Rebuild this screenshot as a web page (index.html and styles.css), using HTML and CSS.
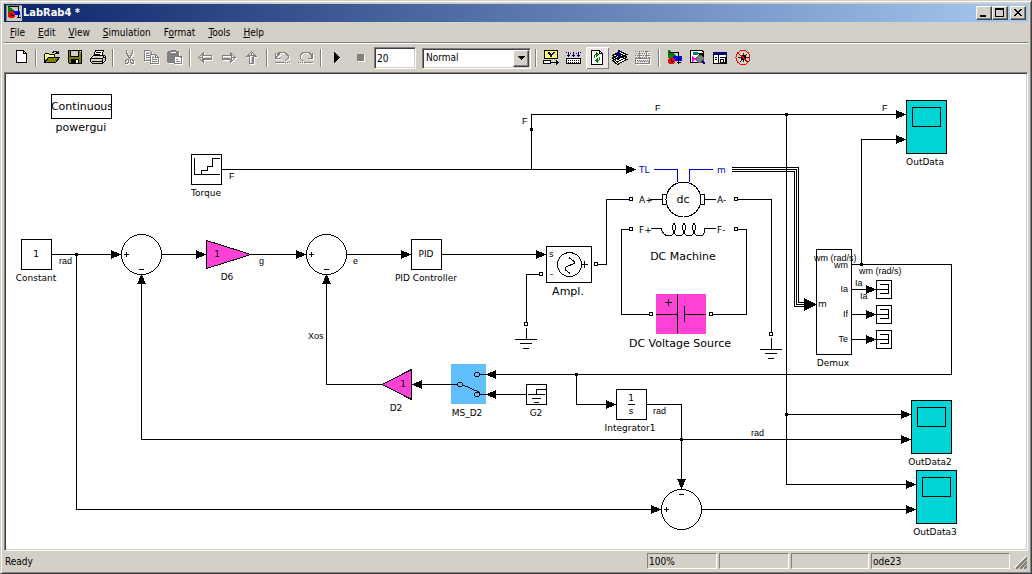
FILE: index.html
```html
<!DOCTYPE html>
<html lang="en">
<head>
<meta charset="utf-8">
<title>LabRab4 *</title>
<link rel="stylesheet" href="styles.css">
</head>
<body>
<div class="window">
  <header class="titlebar">
    <svg class="app-icon" viewBox="0 0 16 16" aria-hidden="true">
      <path fill="#c8ccc8" d="M0 0h16v16H0z"/><path fill="none" stroke="#808080" d="M.5 15.500V.5h15"/>
      <path fill="#008000" d="M2 1l6 4-4 6H2z"/><path fill="#00f" d="M7 6h7v4H7z"/>
      <circle cx="5.500" cy="9.500" r="3.500" fill="red"/><path fill="none" stroke="#000" d="M3 1.500h9.500V13M10.500 12.500h4M5.500 8v2.500H8"/>
    </svg>
    <h1 class="title">LabRab4 *</h1>
    <div class="window-buttons">
      <button class="win-btn" aria-label="Minimize"><svg viewBox="0 0 12 10"><path d="M2 7h6v2H2z"/></svg></button>
      <button class="win-btn" aria-label="Maximize"><svg viewBox="0 0 12 10"><path fill-rule="evenodd" d="M1 0h9v9H1zM2 2v6h7V2z"/></svg></button>
      <button class="win-btn win-close" aria-label="Close"><svg viewBox="0 0 12 10"><path d="M2 1h2v1h1v1h2V2h1V1h2v1H9v1H8v1H7v1h1v1h1v1h1v1H8V7H7V6H5v1H4v1H2V7h1V6h1V5h1V4H4V3H3V2H2z"/></svg></button>
    </div>
  </header>

  <nav class="menubar">
    <button class="menu"><u>F</u>ile</button>
    <button class="menu"><u>E</u>dit</button>
    <button class="menu"><u>V</u>iew</button>
    <button class="menu"><u>S</u>imulation</button>
    <button class="menu">F<u>o</u>rmat</button>
    <button class="menu"><u>T</u>ools</button>
    <button class="menu"><u>H</u>elp</button>
  </nav>

  <div class="toolbar" role="toolbar" aria-label="Model">
    <button class="tool" aria-label="New"><svg viewBox="0 0 17 16"><path fill="#fff" stroke="#000" d="M4.500.5h7l3 3v9h-10zM11.500.5v3h3"/></svg></button>
    <span class="sep"></span>
    <button class="tool" aria-label="Open"><svg viewBox="0 0 17 16"><path fill="#ffff80" stroke="#000" d="M1.500 12V4.500l1-1h3l1 1h5v3H5.500z"/><path fill="#808000" stroke="#000" d="M1.500 12.500l4-5h11l-4 5z"/><path fill="none" stroke="#000" d="M9 2.500h1v-1h3v1h1v1h1V1M12 3.500h3.500"/></svg></button>
    <button class="tool" aria-label="Save"><svg viewBox="0 0 17 16"><path fill="#808000" stroke="#000" d="M2.500.5h13v13h-12l-1-1z"/><path fill="#d4d0c8" stroke="#000" d="M4.500.5h8v6h-8z"/><path d="M5 9h8v4H5z"/><path fill="#fff" d="M10 10h2v3h-2zM14 1h1v1h-1z"/></svg></button>
    <button class="tool" aria-label="Print"><svg viewBox="0 0 17 16"><path fill="#fff" stroke="#000" d="M6.500.5h8l-2 6h-8z"/><path stroke="#000" d="M7 2.500h5M6 4.500h5"/><path fill="#d4d0c8" stroke="#000" d="M1.500 8.500l3-3h11l-2 3v5h-10l-2-2zM13.500 8.500l3-2v4l-3 3"/><path fill="none" stroke="#000" d="M1 8.500h12M3 11.500h10"/><path fill="#ff0" d="M8 10h3v1H8z"/></svg></button>
    <span class="sep"></span>
    <button class="tool off" aria-label="Cut" disabled><svg viewBox="0 0 17 16"><path d="M6.500 0v3h1v2h1v2h1v2M12.500 0v3h-1v2h-1v2h-1v2"/><path d="M5.500 10.500h1v-1h2v3h-1v1h-2zM10.500 9.500h2v1h1v3h-2v-1h-1z"/></svg></button>
    <button class="tool off" aria-label="Copy" disabled><svg viewBox="0 0 17 16"><path d="M7 10.500H1.500V.5h5l2 2V4M3 3.500h3M3 5.500h4M3 7.500h4M7.500 4.500h5l3 3v6h-8zM12.500 4.500v3h3M9 7.500h2M9 9.500h5M9 11.500h5"/></svg></button>
    <button class="tool off" aria-label="Paste" disabled><svg viewBox="0 0 17 16"><path class="solid" d="M2 1h3V0h5v1h3v5h3v8H8v-1H2L1 12V2z"/><path class="light" d="M5 2.500h5"/><path class="page" d="M8.500 6.500h5l2 2v5h-7zM10 9.500h2M10 11.500h4"/></svg></button>
    <span class="sep"></span>
    <button class="tool off" aria-label="Back" disabled><svg viewBox="0 0 17 16"><path d="M1.500 7.500l5-5v3h8v4h-8v3zM2.500 7.500h3M5.500 4v7M6 8.500h9"/></svg></button>
    <button class="tool off" aria-label="Forward" disabled><svg viewBox="0 0 17 16"><path d="M15.500 7.500l-5-5v3h-8v4h8v3zM11.500 7.500h3M11.500 4v7M2 8.500h8"/></svg></button>
    <button class="tool off" aria-label="Up" disabled><svg viewBox="0 0 17 16"><path d="M8.500 1.500l-5 5h3v7h4v-7h3zM8.500 2.500v3M5 5.500h7M9.500 7v6"/></svg></button>
    <span class="sep"></span>
    <button class="tool off" aria-label="Undo" disabled><svg viewBox="0 0 17 16"><path d="M1.500 3v5h5M2 7.500l1-1v-2l2-2h6l3 3v3l-3 2M1 12.500h9M11 12.500h1M13 12.500h1M15 12.500h1M4 5.500l2-2"/></svg></button>
    <button class="tool off" aria-label="Redo" disabled><svg viewBox="0 0 17 16"><path d="M15.500 3v5h-5M15 7.500l-1-1v-2l-2-2H6l-3 3v3l3 2M7 12.500h9M5 12.500h1M3 12.500h1M1 12.500h1"/></svg></button>
    <span class="sep"></span>
    <button class="tool" aria-label="Start simulation"><svg viewBox="0 0 17 16"><path d="M6 2h1v1h1v1h1v1h1v1h1v1h1v1h-1v1h-1v1H9v1H8v1H7v1H6z"/></svg></button>
    <button class="tool off" aria-label="Stop simulation" disabled><svg viewBox="0 0 17 16"><path class="solid" d="M6 4h7v7H6z"/></svg></button>
    <input class="stop-time" type="text" value="20" aria-label="Simulation stop time">
    <span class="mode">
      <select class="mode-select" aria-label="Simulation mode"><option>Normal</option><option>Accelerator</option></select>
      <span class="mode-arrow"><svg viewBox="0 0 7 4"><path d="M0 0h7v1H6v1H5v1H4v1H3V3H2V2H1V1H0z"/></svg></span>
    </span>
    <span class="sep"></span>
    <button class="tool" aria-label="Library link display"><svg viewBox="0 0 17 16"><path fill="#ffff60" stroke="#000" d="M1.500.5h13v8h-13z"/><path fill="#000080" d="M5 2h2v1h1v1h1V3h1V2h2v1h-1v1h-1v1H9v2H7V5H6V4H5z"/><path fill="#fff" stroke="#000" d="M.5 10.500h7v3h-7z"/><path d="M8 12h5v-2h1v1h1v1h1v1h-1v1h-1v1h-1v-2H8z"/></svg></button>
    <button class="tool" aria-label="Build"><svg viewBox="0 0 17 16"><path fill="none" stroke="#000080" d="M2.500 2v5M7.500 2v5M12.500 2v5M1 5.500h3M6 5.500h3M11 5.500h3M0 2.500h1M4 3.500h1M10 3.500h1M14 2.500h1"/><path fill="#fff" stroke="#000" d="M.5 8.500h14v5H.5z"/><path stroke="#000" stroke-dasharray="1 1" d="M2 10.500h12M2 12.500h12"/></svg></button>
    <button class="tool pressed" aria-label="Refresh blocks" aria-pressed="true"><svg viewBox="0 0 17 16"><path fill="#fff" stroke="#000" d="M2.500.5h8l3 3v11h-11zM10.500.5v3h3"/><path fill="#008000" d="M7 2h1v1h1v1h1v1H9v1H8v1H7V5H6v3H5V5h1V4h1zM9 8H8v1H7v1H6v1h1v1h1v1h1v-2h1v-1h1V7h-1v3H9z"/></svg></button>
    <button class="tool" aria-label="Update diagram"><svg viewBox="0 0 17 16"><path fill="#fff" stroke="#000" d="M.5 10.500l8-4 6 3-9 5zM.5 8l8-4 6 3-9 5zM.5 5.500l8-4 6 3-9 5z"/><path fill="#000080" d="M6 0h2v4h2v1H9v1H8v1H6V6H5V5H4V4h2z"/></svg></button>
    <button class="tool off" aria-label="Build subsystem" disabled><svg viewBox="0 0 17 16"><path d="M4.500 1v7M11.500 1v7M2.500 5.500h4M9.500 5.500h4M.5 8.500h14v5H.5z"/><path stroke-dasharray="1 1" d="M0 1.500h15M1 3.500h14M0 5.500h15M1 7.500h14M2 10.500h12M3 11.500h11"/></svg></button>
    <span class="sep"></span>
    <button class="tool" aria-label="Library browser"><svg viewBox="0 0 17 16"><path fill="#008000" d="M2 0h1l7 5v3H2z"/><path fill="#00f" d="M7 6h9v5H7z"/><circle cx="5.500" cy="11" r="3.500" fill="red"/><path fill="none" stroke="#000" d="M3 2.500h9.500V14M11 12.500h4M5.500 8.500v3H8"/></svg></button>
    <button class="tool" aria-label="Model explorer"><svg viewBox="0 0 17 16"><path fill="#fff" stroke="#000" d="M1.500.5h12l1 2v10h-13z"/><path fill="#008080" d="M4 2h5v3H4z"/><path fill="#f0f" d="M3 6l5 3-5 3z"/><path stroke="#000" d="M9 3.500h4V7"/><circle cx="11" cy="9" r="3.500" fill="#808080" stroke="#606060"/><path stroke="#000080" stroke-width="2" d="M13 11l3 3"/></svg></button>
    <button class="tool" aria-label="Model browser"><svg viewBox="0 0 17 16"><path fill="#fff" stroke="#000" d="M1.500 2.500h13v11h-13z"/><path fill="#000080" d="M1 2h14v3H1z"/><path fill="none" stroke="#000" d="M6.500 5v8M3 7.500h2M3 9.500h2M8 7.500h5v5h-2M8.500 9.500h3v3h-3z"/></svg></button>
    <button class="tool" aria-label="Debug"><svg viewBox="0 0 17 16"><path fill="none" stroke="#202020" d="M4 4l8 8M12 4l-7 8M3 7.500h11M8.500 3v9"/><ellipse cx="8.500" cy="7.500" rx="3" ry="3"/><path fill="#ffffa0" d="M5 4h2v2H5zM9 11h2v1H9z"/><circle cx="8" cy="7.500" r="7" fill="none" stroke="red"/><path stroke="red" d="M3 3l10 9"/></svg></button>
  </div>

  <main class="canvas">
    <svg class="diagram" role="img" aria-label="LabRab4 block diagram">
      <defs>
        <path id="ar" d="M0 .5L-10-4v9z"/>
        <path id="al" d="M0 .5L10-4v9z"/>
        <path id="au" d="M.5 0L-4 10h9z"/>
        <path id="ad" d="M.5 0L-4-10h9z"/>
        <path id="dot" d="M-1-1h3v3h-3z"/>
        <path id="port" class="block" d="M-1.500-1.500h3v3h-3z"/>
        <path id="plus" class="wire" d="M-2 .5h5M.5-2v5"/>
        <path id="minus" class="wire" d="M-2 .5h5"/>
        <path id="ground" class="wire" d="M.5-11V.5M-11 .5h22M-6 4.500H6M-3 9.500h6"/>
        <g id="scope"><path class="scope-body" d="M.5.5h40v53H.5z"/><path class="scope-body" d="M6.500 7.500h28v19h-28z"/></g>
        <g id="term"><path class="block" d="M.5.5h15v18H.5z"/><path class="wire" d="M4 4.500h8.500v9H4M0 9.500h12"/></g>
      </defs>
      <g transform="translate(-6 -74)">
        <g class="wire">
          <path d="M221 169.500H630M531.500 169.500V114.500H900M786.500 114.500V484.500H910M786.500 414.500H905"/>
          <path d="M52 254.500H115M76.500 254.500V509.500H655M161 254.500H200M251 254.500H300M346 254.500H405M441 254.500H540"/>
          <path d="M141.500 280V439.500H905M326.500 280V384.500H382M415 384.500H451M490 394.500H526"/>
          <path d="M490 374.500H951.500V264.500H852M861.500 264.500V139.500H900M576.500 374.500V404.500H610M646 404.500H681.500V485M701 509.500H910"/>
          <path d="M852 289.500H870M852 314.500H870M852 339.500H870"/>
          <path d="M597 264.500H606.500V199.500H631M541 274.500H526.500V324M736 199.500H771.500V334M631 229.500H621.500V314.500H651M736 229.500H746.500V314.500H711"/>
          <path d="M732 167.500H798.500V302.500H806M732 169.500H796.500V304.500H806M732 171.500H794.500V306.500H806"/>
        </g>

        <use href="#dot" x="76" y="254"/><use href="#dot" x="531" y="129"/><use href="#dot" x="786" y="114"/><use href="#dot" x="786" y="414"/>
        <use href="#dot" x="861" y="264"/><use href="#dot" x="576" y="374"/><use href="#dot" x="681" y="439"/>

        <use href="#ar" x="121" y="254"/><use href="#ar" x="206" y="254"/><use href="#ar" x="306" y="254"/><use href="#ar" x="411" y="254"/>
        <use href="#ar" x="546" y="254"/><use href="#ar" x="636" y="169"/><use href="#ar" x="906" y="114"/><use href="#ar" x="906" y="139"/>
        <use href="#ar" x="876" y="289"/><use href="#ar" x="876" y="314"/><use href="#ar" x="876" y="339"/><use href="#ar" x="616" y="404"/>
        <use href="#ar" x="661" y="509"/><use href="#ar" x="911" y="414"/><use href="#ar" x="911" y="439"/><use href="#ar" x="916" y="484"/><use href="#ar" x="916" y="509"/>
        <use href="#al" x="412" y="384"/><use href="#al" x="486" y="374"/><use href="#al" x="486" y="394"/>
        <use href="#au" x="141" y="274"/><use href="#au" x="326" y="274"/><use href="#ad" x="681" y="489"/>
        <path d="M817 304.500L804 298v13z"/>

        <path class="block" d="M51.500 94.500h60v24h-60z"/>
        <svg x="52" y="95" width="59" height="23"><text class="big mid" x="30" y="15">Continuous</text></svg>
        <text class="big mid" x="81" y="131">powergui</text>

        <path class="block" d="M191.500 154.500h30v30h-30z"/>
        <path class="wire" d="M194.500 158v16.500h25M201.500 174v-3.500h6v-4h5v-8h7"/>
        <text class="name mid" x="206" y="196">Torque</text>

        <path class="block" d="M21.500 239.500h30v30h-30z"/>
        <text class="name mid" x="36" y="257">1</text>
        <text class="name mid" x="36" y="281">Constant</text>

        <circle class="block" cx="141.500" cy="254.500" r="20"/><use href="#plus" x="126" y="254"/><use href="#minus" x="141" y="269"/>
        <circle class="block" cx="326.500" cy="254.500" r="20"/><use href="#plus" x="311" y="254"/><use href="#minus" x="326" y="269"/>
        <circle class="block" cx="681.500" cy="509.500" r="20"/><use href="#plus" x="666" y="509"/><use href="#minus" x="681" y="494"/>

        <path class="gain" d="M206.500 240.500L251 254.500L206.500 268.500z"/>
        <text class="name mid" x="217" y="257">1</text><text class="name mid" x="227" y="280">D6</text>
        <path class="gain" d="M411.500 369.500L382 384.500L411.500 399.500z"/>
        <text class="name mid" x="403" y="387">1</text><text class="name mid" x="396" y="411">D2</text>

        <path class="block" d="M411.500 239.500h30v30h-30z"/>
        <text class="name mid" x="426" y="257">PID</text><text class="name mid" x="426" y="281">PID Controller</text>

        <path class="block" d="M546.500 246.500h45v36h-45z"/>
        <circle class="block" cx="569.500" cy="264.500" r="12"/>
        <path class="wire" d="M569 257.500l5 4v2l-9 4v2l5 4M581 264.500h7M584.500 261v7"/>
        <text class="name" x="549" y="257">s</text><text class="name" x="550" y="277">-</text>
        <text class="big mid" x="568" y="295">Ampl.</text>
        <use href="#port" x="596" y="264"/><use href="#port" x="541" y="274"/><use href="#port" x="526" y="324"/>
        <use href="#ground" x="526" y="339"/>

        <text class="name blue" x="639" y="173">TL</text><text class="name blue" x="717" y="173">m</text>
        <path class="block" d="M662.500 194.500h4v10h-4zM700.500 194.500h4v10h-4z"/>
        <circle class="block" cx="683.500" cy="199.500" r="17.500"/>
        <path class="blue-wire" d="M654 169.500h23.500V182M689.500 182v-12.500H713"/>
        <text class="big mid" x="683" y="203">dc</text>
        <path class="wire" d="M650 199.500h12M705 199.500h11M651 228.500h10.500v2l3 4 2 1h5l2-2 2-5v-2l-1-3-1 0-1 3v2l2 5 2 2h5l2-2 2-5v-2l-1-3-1 0-1 3v2l2 5 2 2h5l2-2 2-5v-2l-1-3-1 0-1 3v2l2 5 2 2h6l2-3v-4h11.500"/>
        <text class="name" x="639" y="203">A+</text><text class="name" x="717" y="203">A-</text>
        <text class="name" x="639" y="233">F+</text><text class="name" x="717" y="233">F-</text>
        <text class="big mid" x="683" y="260">DC Machine</text>
        <use href="#port" x="631" y="199"/><use href="#port" x="736" y="199"/><use href="#port" x="631" y="229"/><use href="#port" x="736" y="229"/>
        <use href="#port" x="771" y="334"/><use href="#port" x="651" y="314"/><use href="#port" x="711" y="314"/>
        <use href="#ground" x="771" y="349"/>

        <path class="source" d="M656 294h50v40h-50z"/>
        <path class="wire" d="M656 314.500h21M677.500 294v39M684.500 306v16M684 314.500h22M665 302.500h7M668.500 299v7"/>
        <text class="big mid" x="680" y="347">DC Voltage Source</text>

        <path class="switch" d="M451 364h35v40h-35z"/>
        <g class="wire"><circle cx="460" cy="384.500" r="2.500"/><circle cx="477" cy="374.500" r="2.500"/><circle cx="477" cy="394.500" r="2.500"/><path d="M451 384.500h6M480 374.500h6M480 394.500h6M462 384.500l18 8"/></g>
        <text class="name mid" x="467" y="416">MS_D2</text>

        <path class="block" d="M526.500 384.500h20v20h-20z"/>
        <path class="wire" d="M547 389.500h-10.500v5M528 394.500h17M532 398.500h9M534 402.500h5"/>
        <text class="name mid" x="536" y="416">G2</text>

        <path class="block" d="M616.500 389.500h30v30h-30z"/><path class="wire" d="M628 404.500h7"/>
        <text class="name mid" x="631" y="401">1</text><text class="name mid" x="631" y="414">s</text>
        <text class="name mid" x="630" y="431">Integrator1</text>

        <path class="wire" d="M816.500 249.500h35v105h-35z"/>
        <text class="name" x="818" y="307">m</text>
        <text class="sig end" x="848" y="268">wm</text><text class="sig end" x="848" y="292">Ia</text>
        <text class="sig end" x="848" y="317">If</text><text class="sig end" x="848" y="342">Te</text>
        <text class="name mid" x="833" y="366">Demux</text>
        <use href="#term" x="876" y="280"/><use href="#term" x="876" y="305"/><use href="#term" x="876" y="330"/>

        <use href="#scope" x="906" y="100"/><text class="name mid" x="925" y="165">OutData</text>
        <use href="#scope" x="911" y="400"/><text class="name mid" x="930" y="465">OutData2</text>
        <use href="#scope" x="916" y="470"/><text class="name mid" x="935" y="535">OutData3</text>

        <g class="sig">
          <text x="59" y="264">rad</text><text x="229" y="179">F</text><text x="522" y="124">F</text><text x="655" y="111">F</text><text x="882" y="111">F</text>
          <text x="259" y="264">g</text><text x="353" y="264">e</text><text x="308" y="339">Xos</text><text x="653" y="414">rad</text><text x="751" y="436">rad</text>
          <text x="814" y="261">wm (rad/s)</text><text x="859" y="274">wm (rad/s)</text><text x="855" y="286">Ia</text><text x="860" y="299">Ia</text>
        </g>
      </g>
    </svg>
  </main>

  <footer class="statusbar">
    <span class="status-text">Ready</span>
    <span class="panel">100%</span>
    <span class="panel"></span>
    <span class="panel panel-mid"></span>
    <span class="panel panel-wide">ode23</span>
    <svg class="grip" viewBox="0 0 13 13" aria-hidden="true"><path stroke="#fff" d="M0 12L12 0M4 12l8-8M8 12l4-4"/><path stroke="#808080" stroke-width="2" d="M2 13L13 2M6 13l7-7M10 13l3-3"/></svg>
  </footer>
</div>
</body>
</html>
```
FILE: styles.css
```css
* { box-sizing: border-box; }

body {
  margin: 0;
  font: 10px/14px "DejaVu Sans Condensed", "DejaVu Sans", sans-serif;
  color: #000;
}

button, input, select {
  font: inherit;
  color: inherit;
  margin: 0;
  padding: 0;
  border: 0;
  border-radius: 0;
  background: none;
}

svg { display: block; shape-rendering: crispEdges; }

.window {
  display: flex;
  flex-direction: column;
  height: 100vh;
  padding: 2px;
  background: #d4d0c8;
  border: 1px solid;
  border-color: #d4d0c8 #404040 #404040 #d4d0c8;
  box-shadow: inset 1px 1px #fff, inset -1px -1px #808080;
}

.titlebar {
  display: flex;
  align-items: center;
  height: 18px;
  margin: 1px 1px 0;
  padding: 0 2px;
  background: linear-gradient(to right, #0a246a, #a6caf0);
}

.app-icon { width: 16px; height: 16px; }

.title {
  flex: 1;
  margin: 0 0 0 1px;
  font-size: 11px;
  line-height: 18px;
  color: #fff;
}

.window-buttons { display: flex; }

.win-btn {
  width: 16px;
  height: 14px;
  padding: 1px;
  background: #d4d0c8;
  border: 1px solid;
  border-color: #fff #404040 #404040 #fff;
  box-shadow: inset -1px -1px #808080;
}

.win-btn svg { width: 12px; height: 10px; }
.win-close { margin-left: 2px; }

.menubar {
  display: flex;
  gap: 1px;
  height: 21px;
  margin: 0 1px;
  border-bottom: 1px solid #808080;
}

.menu { padding: 1px 6px 0; line-height: 19px; }

.toolbar {
  display: flex;
  align-items: center;
  height: 29px;
  margin: 0 1px;
  padding-left: 5px;
  border-top: 1px solid #fff;
}

.tool {
  flex: none;
  width: 23px;
  height: 22px;
  padding: 3px;
}

.tool svg { width: 17px; height: 16px; }

.pressed {
  background: #ece9e4;
  box-shadow: inset 1px 1px #fff, inset -1px -1px #808080;
}

.off svg { filter: drop-shadow(1px 1px 0 #fff); }
.off path { fill: none; stroke: #808080; }
.off .solid { fill: #808080; stroke: none; }
.off .light { stroke: #fff; }
.off .page { fill: #fff; }

.sep {
  flex: none;
  width: 8px;
  height: 18px;
  background: linear-gradient(to right, transparent 3px, #808080 3px, #808080 4px, #fff 4px, #fff 5px, transparent 5px);
}

.stop-time, .mode {
  border: 1px solid;
  border-color: #808080 #fff #fff #808080;
  background: #fff;
  box-shadow: inset 1px 1px #404040, inset -1px -1px #d4d0c8;
}

.stop-time {
  width: 42px;
  height: 22px;
  margin: 0 6px 0 3px;
  padding: 0 2px;
}

.mode {
  position: relative;
  width: 109px;
  height: 21px;
  margin-right: 1px;
}

.mode-select {
  width: 100%;
  height: 100%;
  padding-left: 3px;
  appearance: none;
}

.mode-arrow {
  position: absolute;
  top: 1px;
  right: 1px;
  bottom: 1px;
  width: 16px;
  display: grid;
  place-items: center;
  background: #d4d0c8;
  border: 1px solid;
  border-color: #fff #404040 #404040 #fff;
  box-shadow: inset -1px -1px #808080;
  pointer-events: none;
}

.mode-arrow svg { width: 7px; height: 4px; }

.canvas {
  flex: 1;
  min-height: 0;
  margin: 0 1px;
  overflow: hidden;
  background: #fff;
  border: 1px solid;
  border-color: #808080 #fff #fff #808080;
  padding: 1px;
  box-shadow: inset 1px 1px #404040, inset -1px -1px #d4d0c8;
}

.diagram { width: 100%; height: 100%; overflow: hidden; }
.wire { fill: none; stroke: #000; }
.block { fill: #fff; stroke: #000; }
.gain { fill: #ff42d6; stroke: #000; }
.source { fill: #ff42d6; }
.switch { fill: #5fbfff; }
.scope-body { fill: #00d4d4; stroke: #000; }
.blue-wire { fill: none; stroke: #0000c8; }
.blue { fill: #0000c8; }
.name { font: 9px "DejaVu Sans", sans-serif; }
.big { font: 11px "DejaVu Sans", sans-serif; }
.sig { font: 9px "Liberation Sans", sans-serif; }
.mid { text-anchor: middle; }
.end { text-anchor: end; }

.statusbar {
  display: flex;
  gap: 2px;
  height: 20px;
  margin: 0 1px;
  padding: 2px 0;
}

.status-text { flex: 1; padding: 2px 1px 0; }

.panel {
  width: 70px;
  height: 16px;
  padding: 1px 1px 0;
  border: 1px solid;
  border-color: #808080 #fff #fff #808080;
}

.panel-mid { width: 78px; }
.panel-wide { width: 139px; }
.grip { width: 13px; height: 13px; margin: 3px 1px 0 2px; }
```
